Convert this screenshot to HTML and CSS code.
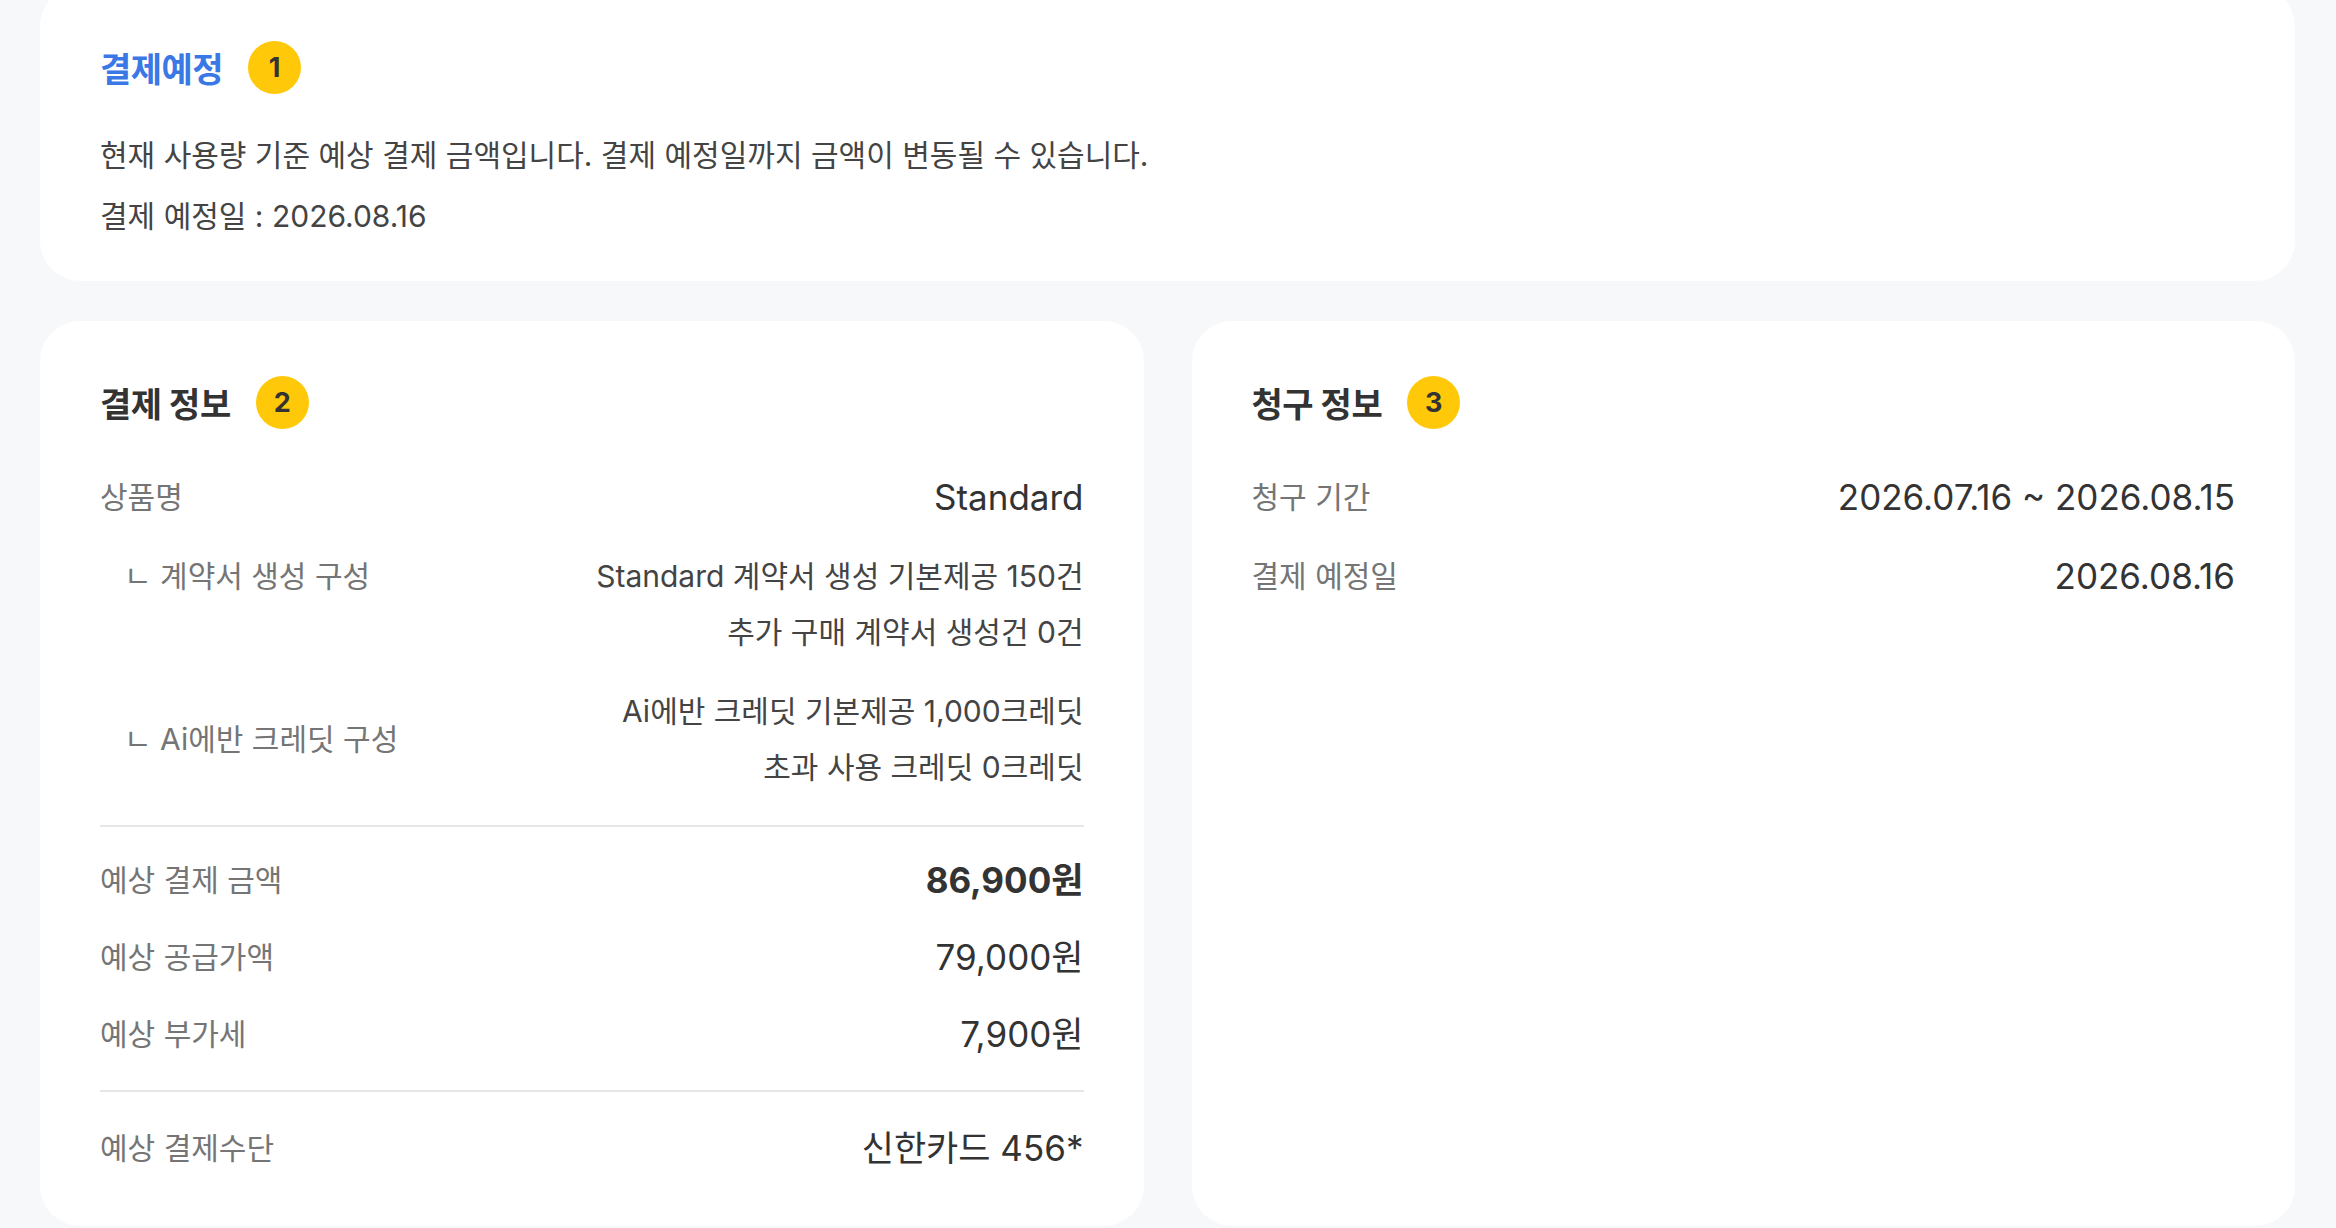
FILE: index.html
```html
<!DOCTYPE html>
<html lang="ko">
<head>
    <meta charset="UTF-8">
    <meta name="viewport" content="width=device-width, initial-scale=1.0">
    <title>결제 정보</title>
    <link rel="stylesheet" href="styles.css">
</head>
<body>

<div class="page">
    <!-- 결제예정 안내 -->
    <section class="card card-notice">
        <div class="card-head">
            <h2 class="card-title title-blue">결제예정</h2>
            <span class="badge">1</span>
        </div>
        <p class="notice-text notice-first">현재 사용량 기준 예상 결제 금액입니다. 결제 예정일까지 금액이 변동될 수 있습니다.</p>
        <p class="notice-text">결제 예정일 : 2026.08.16</p>
    </section>

    <div class="card-row">
        <!-- 결제 정보 -->
        <section class="card">
            <div class="card-head">
                <h2 class="card-title">결제 정보</h2>
                <span class="badge">2</span>
            </div>

            <div class="info-list">
                <div class="info-row">
                    <span class="info-label">상품명</span>
                    <span class="info-value">Standard</span>
                </div>
                <div class="info-row align-top">
                    <span class="info-label sub-label">ㄴ 계약서 생성 구성</span>
                    <div class="sub-values">
                        <span>Standard 계약서 생성 기본제공 150건</span>
                        <span>추가 구매 계약서 생성건 0건</span>
                    </div>
                </div>
                <div class="info-row">
                    <span class="info-label sub-label">ㄴ Ai에반 크레딧 구성</span>
                    <div class="sub-values">
                        <span>Ai에반 크레딧 기본제공 1,000크레딧</span>
                        <span>초과 사용 크레딧 0크레딧</span>
                    </div>
                </div>
            </div>

            <div class="divider"></div>

            <div class="info-list list-amounts">
                <div class="info-row">
                    <span class="info-label">예상 결제 금액</span>
                    <span class="info-value strong">86,900원</span>
                </div>
                <div class="info-row">
                    <span class="info-label">예상 공급가액</span>
                    <span class="info-value">79,000원</span>
                </div>
                <div class="info-row">
                    <span class="info-label">예상 부가세</span>
                    <span class="info-value">7,900원</span>
                </div>
            </div>

            <div class="divider divider-tight"></div>

            <div class="info-list">
                <div class="info-row">
                    <span class="info-label">예상 결제수단</span>
                    <span class="info-value">신한카드 456*</span>
                </div>
            </div>
        </section>

        <!-- 청구 정보 -->
        <section class="card">
            <div class="card-head">
                <h2 class="card-title">청구 정보</h2>
                <span class="badge">3</span>
            </div>

            <div class="info-list">
                <div class="info-row">
                    <span class="info-label">청구 기간</span>
                    <span class="info-value">2026.07.16 ~ 2026.08.15</span>
                </div>
                <div class="info-row">
                    <span class="info-label">결제 예정일</span>
                    <span class="info-value">2026.08.16</span>
                </div>
            </div>
        </section>
    </div>
</div>

</body>
</html>
```

FILE: styles.css
```css
body {
    font-family: Inter, "Noto Sans CJK KR", sans-serif;
    background-color: #f7f8fa;
    color: #333;
    margin: 0;
    padding: 0;
    overflow: hidden;
}

.page {
    padding: 0 41px 0 40px;
    margin-top: -14px;
    display: flex;
    flex-direction: column;
    gap: 40px;
}

.card {
    background-color: #fff;
    border-radius: 40px;
    padding: 55px 60px 50px;
}

.card-notice {
    padding-bottom: 44px;
}

.card-row {
    display: grid;
    grid-template-columns: 1fr 1fr;
    gap: 48px;
}

.card-head {
    display: flex;
    align-items: center;
    gap: 25px;
    height: 53px;
}

.card-title {
    margin: 0;
    font-size: 34px;
    font-weight: 700;
    color: #333;
    letter-spacing: -0.5px;
}

.title-blue {
    color: #3a78e6;
}

.badge {
    width: 53px;
    height: 53px;
    border-radius: 50%;
    background-color: #ffc90a;
    color: #333;
    font-size: 27px;
    font-weight: 700;
    display: flex;
    align-items: center;
    justify-content: center;
}

.notice-text {
    margin: 19px 0 0;
    font-size: 30px;
    line-height: 42px;
    color: #444;
}

.notice-first {
    margin-top: 40px;
}

.info-list {
    display: flex;
    flex-direction: column;
    gap: 23px;
    margin-top: 40px;
}

.info-list.list-amounts {
    gap: 21px;
}

.info-row {
    display: flex;
    justify-content: space-between;
    align-items: center;
}

.info-row.align-top {
    align-items: flex-start;
}

.info-label {
    font-size: 30px;
    line-height: 56px;
    color: #757575;
}

.sub-label {
    padding-left: 24px;
}

.info-value {
    font-size: 35px;
    line-height: 56px;
    color: #333;
}

.info-value.strong {
    font-weight: 700;
}

.sub-values {
    display: flex;
    flex-direction: column;
    align-items: flex-end;
    font-size: 30px;
    line-height: 56px;
    color: #444;
}

.divider {
    height: 2px;
    background-color: #e6e6e6;
    margin-top: 30px;
}

.divider-tight {
    margin-top: 28px;
}

.divider + .info-list {
    margin-top: 25px;
}

.divider-tight + .info-list {
    margin-top: 28px;
}
```
